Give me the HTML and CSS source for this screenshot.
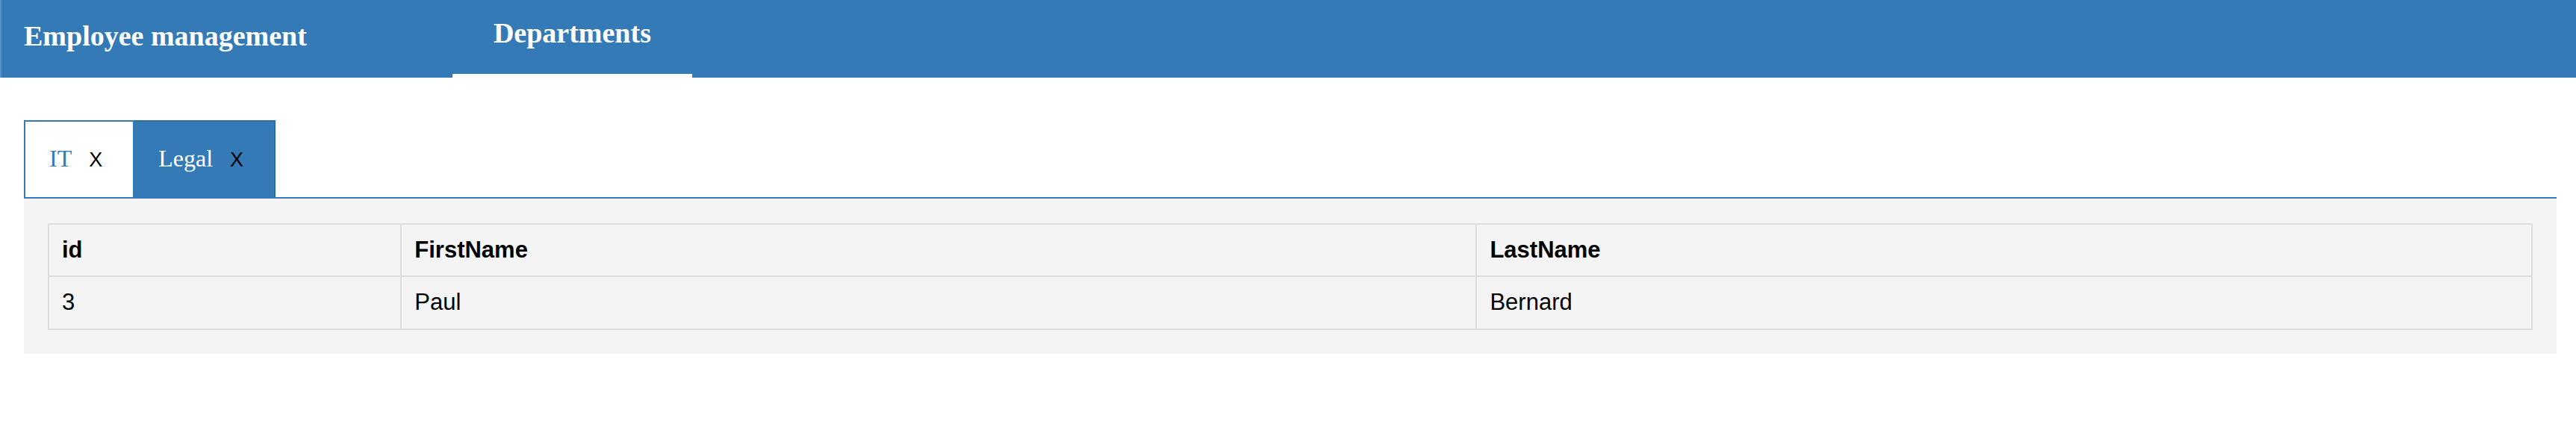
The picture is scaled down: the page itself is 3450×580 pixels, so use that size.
FILE: index.html
```html
<!DOCTYPE html>
<html lang="en">
<head>
<meta charset="utf-8">
<title>Employee management</title>
<link rel="stylesheet" href="styles.css">
</head>
<body>
<nav class="navbar">
  <a class="brand">Employee management</a>
  <ul class="nav-links">
    <li class="nav-item active"><a>Departments</a></li>
  </ul>
</nav>
<main class="content">
  <div class="tab-bar">
    <div class="tab tab-plain"><span class="tab-label">IT</span><span class="tab-close">X</span></div>
    <div class="tab tab-filled"><span class="tab-label">Legal</span><span class="tab-close">X</span></div>
  </div>
  <section class="panel">
    <table class="grid">
      <thead>
        <tr><th class="col-id">id</th><th class="col-first">FirstName</th><th class="col-last">LastName</th></tr>
      </thead>
      <tbody>
        <tr><td>3</td><td>Paul</td><td>Bernard</td></tr>
      </tbody>
    </table>
  </section>
</main>
</body>
</html>
```
FILE: styles.css
```css
html, body {
  margin: 0;
  padding: 0;
  background: #ffffff;
}

body {
  font-family: "Liberation Serif", "Times New Roman", serif;
}

.navbar {
  display: flex;
  align-items: stretch;
  height: 104px;
  background: #337ab7;
  border-left: 2px solid #5a91c4;
  box-sizing: border-box;
  padding-left: 30px;
}

.brand {
  display: block;
  color: #ffffff;
  font-weight: bold;
  font-size: 38px;
  line-height: 44px;
  padding-top: 26px;
  white-space: nowrap;
}

.nav-links {
  display: flex;
  list-style: none;
  margin: 0 0 0 195px;
  padding: 0;
}

.nav-item a {
  display: block;
  box-sizing: border-box;
  height: 104px;
  padding: 22px 55px 0;
  color: #ffffff;
  font-weight: bold;
  font-size: 38px;
  line-height: 44px;
  white-space: nowrap;
}

.nav-item.active a {
  border-bottom: 5px solid #ffffff;
}

.content {
  padding: 57px 26px 0 32px;
}

.tab-bar {
  display: flex;
  border-bottom: 2px solid #337ab7;
}

.tab {
  display: flex;
  align-items: baseline;
  gap: 23px;
  height: 103px;
  box-sizing: border-box;
  padding: 31px 41px 0 32px;
  border: 2px solid #337ab7;
  border-bottom: none;
}

.tab + .tab {
  border-left: none;
}

.tab-plain {
  background: #ffffff;
}

.tab-filled {
  background: #337ab7;
  border-color: #2e6da4;
}

.tab-label {
  font-size: 32px;
  line-height: 37px;
  color: #337ab7;
}

.tab-filled .tab-label {
  color: #ffffff;
}

.tab-close {
  font-family: "Liberation Sans", Arial, sans-serif;
  font-size: 27px;
  color: #000000;
}

.panel {
  background: #f4f4f4;
  padding: 33px 32px 32px;
}

.grid {
  width: 100%;
  border-collapse: collapse;
  font-family: "Liberation Sans", Arial, sans-serif;
  font-size: 31px;
  line-height: 44px;
  color: #000000;
}

.grid th,
.grid td {
  border: 2px solid #dddddd;
  text-align: left;
  padding: 12px 17px;
  height: 44px;
}

.grid td {
  padding-bottom: 13px;
}

.grid th {
  font-weight: bold;
}

.col-id { width: 14.2%; }
.col-first { width: 43.3%; }
.col-last { width: 42.5%; }
```
